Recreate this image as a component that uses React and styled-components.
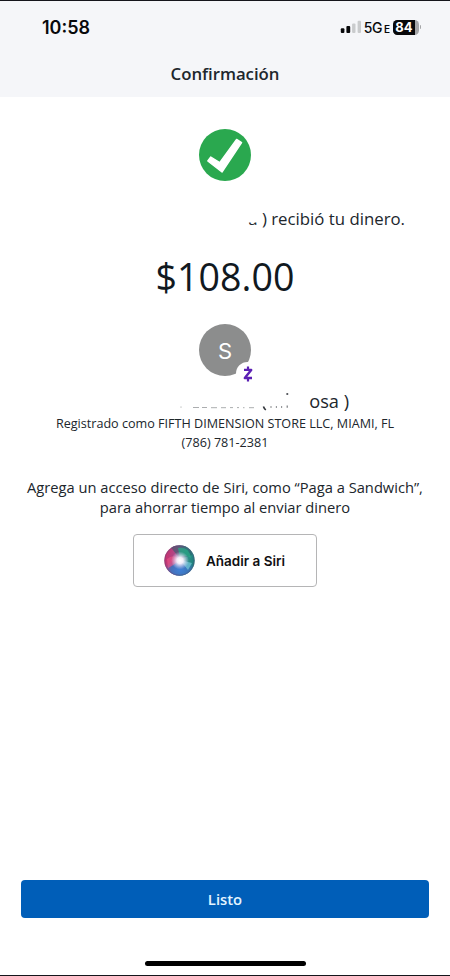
import styled, { createGlobalStyle } from 'styled-components';

export default function App() {
  return (
    <Screen>
      <GlobalStyle />
      <Header>
        <StatusBar>
          <Clock>10:58</Clock>
          <StatusIcons>
            <SignalIcon />
            <Network>
              5G<small>E</small>
            </Network>
            <Battery>
              <BatteryLevel>84</BatteryLevel>
            </Battery>
            <BatteryCap />
          </StatusIcons>
        </StatusBar>
        <Title>Confirmación</Title>
      </Header>
      <Main>
        <CheckIcon />
        <Received>
          <Faded>a</Faded> <Paren>)</Paren> recibió tu dinero.
        </Received>
        <Amount>$108.00</Amount>
        <Avatar>
          S
          <ZelleBadge>
            <ZelleIcon />
          </ZelleBadge>
        </Avatar>
        <Recipient>
          <NameTraces />
          <span>osa )</span>
        </Recipient>
        <Details>
          <p>Registrado como FIFTH DIMENSION STORE LLC, MIAMI, FL</p>
          <p>(786) 781-2381</p>
        </Details>
        <SiriText>
          <p>Agrega un acceso directo de Siri, como “Paga a Sandwich”,</p>
          <p>para ahorrar tiempo al enviar dinero</p>
        </SiriText>
        <SiriButton>
          <SiriOrb />
          <span>Añadir a Siri</span>
        </SiriButton>
      </Main>
      <Footer>
        <DoneButton>Listo</DoneButton>
        <HomeIndicator />
      </Footer>
    </Screen>
  );
}

function SignalIcon() {
  return (
    <svg width="22" height="14" viewBox="0 0 22 14">
      <rect x="0.8" y="8.2" width="3.6" height="4.8" rx="1" fill="#08090b" />
      <rect x="6.4" y="6" width="3.8" height="7" rx="1" fill="#08090b" />
      <rect x="12.1" y="3.4" width="3.4" height="9.6" rx="1" fill="#c9cbcd" />
      <rect x="17.6" y="0.8" width="3.4" height="12.2" rx="1" fill="#c9cbcd" />
    </svg>
  );
}

function CheckIcon() {
  return (
    <svg width="52" height="52" viewBox="0 0 52 52">
      <circle cx="26" cy="26" r="26" fill="#2aa84f" />
      <path
        d="M8.8 32 L11.8 28 L20.7 33.6 L37.6 10.4 L42.6 13.6 L23 43 Z"
        fill="#fff"
        stroke="#fff"
        strokeWidth="1.4"
        strokeLinejoin="round"
      />
    </svg>
  );
}

function ZelleIcon() {
  return (
    <svg width="12" height="16" viewBox="0 0 12 16" fill="none" stroke="#5b20b4">
      <path d="M2 3.9 H9.2 L2.8 12 H10" strokeWidth="2.4" strokeLinejoin="round" />
      <path d="M6 0.6 V3.9 M6 12 V15.4" strokeWidth="2.2" />
    </svg>
  );
}

// what is left of the name where it has been wiped
function NameTraces() {
  return (
    <svg width="130" height="24" viewBox="0 0 130 24" fill="none" stroke="#30343a">
      <path d="M13 17.5 v1.2" strokeWidth="1" opacity="0.4" />
      <path
        d="M25 18.5 h6 M34 18.5 h5 M43 18.7 h6 M53 18.7 h5 M62 18.6 h3 M69 18.6 h2 M75 18.7 h1.5 M81 18.7 h5"
        strokeWidth="0.9"
        opacity="0.45"
      />
      <path d="M95.4 17.4 q.8 2.2 2.4 3.6" strokeWidth="1.6" />
      <path d="M103 17.2 v1.6 M108.4 17.2 v1.6 M113.6 17.2 v1.6 M119.2 16.6 v2.2" strokeWidth="1.1" opacity="0.7" />
      <path d="M118.4 5 h1.8" strokeWidth="1.6" />
    </svg>
  );
}

function SiriOrb() {
  return (
    <svg width="31" height="31" viewBox="0 0 31 31">
      <defs>
        <radialGradient id="core">
          <stop offset="0" stopColor="#fff" />
          <stop offset="0.35" stopColor="#f8f2fd" stopOpacity="0.95" />
          <stop offset="1" stopColor="#d5d1f5" stopOpacity="0" />
        </radialGradient>
        <linearGradient id="base" x1="0" y1="0.4" x2="1" y2="0.6">
          <stop offset="0" stopColor="#cb2d6b" />
          <stop offset="0.4" stopColor="#a65190" />
          <stop offset="0.65" stopColor="#399a91" />
          <stop offset="1" stopColor="#177b79" />
        </linearGradient>
        <radialGradient id="blue">
          <stop offset="0" stopColor="#4080d8" />
          <stop offset="0.6" stopColor="#3c72bd" stopOpacity="0.9" />
          <stop offset="1" stopColor="#3c72bd" stopOpacity="0" />
        </radialGradient>
        <clipPath id="orb">
          <circle cx="15.5" cy="15.5" r="15.2" />
        </clipPath>
      </defs>
      <g clipPath="url(#orb)">
        <rect width="31" height="31" fill="url(#base)" />
        <path d="M5 0 H26 L28 10 L16 14 Z" fill="#285d68" opacity="0.55" />
        <path d="M14 3 Q25 1 27 13 Q18 8 16 14 Z" fill="#26ad88" opacity="0.7" />
        <ellipse cx="16" cy="25" rx="15" ry="11" fill="url(#blue)" />
        <path d="M3 14 Q10 8 16 15 Q10 20 4 23 Z" fill="#ee5385" opacity="0.6" />
        <path d="M16 15 L28 18 L24 25 Z" fill="#7ed8dd" opacity="0.6" />
        <circle cx="16" cy="15.5" r="9" fill="url(#core)" />
      </g>
      <circle cx="15.5" cy="15.5" r="14.8" fill="none" stroke="#594e7b" opacity="0.5" />
    </svg>
  );
}

const GlobalStyle = createGlobalStyle`
  * {
    box-sizing: border-box;
  }
  body {
    margin: 0;
    background: #fff;
  }
  p, h1 {
    margin: 0;
  }
  svg {
    display: block;
    flex-shrink: 0;
  }
`;

const Screen = styled.div`
  width: 450px;
  height: 976px;
  display: flex;
  flex-direction: column;
  border-top: 1px solid #15151b;
  border-bottom: 1px solid #15151b;
  font-family: 'Open Sans', 'Noto Sans', sans-serif;
  color: #20262c;
  white-space: nowrap;
  overflow: hidden;
`;

const Header = styled.header`
  height: 96px;
  flex-shrink: 0;
  background: #f5f6f9;
`;

const StatusBar = styled.div`
  height: 52px;
  display: flex;
  justify-content: space-between;
  padding: 15px 29px 0 42px;
  font-family: Inter, sans-serif;
  color: #08090b;
`;

const Clock = styled.div`
  padding-top: 1px;
  font-size: 18px;
  font-weight: 600;
  line-height: 22px;
`;

const StatusIcons = styled.div`
  height: 22px;
  display: flex;
  align-items: center;
`;

const Network = styled.span`
  margin-left: 2px;
  font-size: 14px;
  font-weight: 500;
  letter-spacing: -0.5px;
  small {
    margin-left: 2px;
    font-size: 10px;
    font-weight: 600;
  }
`;

const Battery = styled.div`
  width: 26px;
  height: 15px;
  margin-left: 3px;
  border-radius: 4.5px;
  background: #a5a6a8;
  overflow: hidden;
`;

const BatteryLevel = styled.div`
  width: 22px;
  height: 15px;
  padding-left: 1px;
  background: #08090b;
  color: #fff;
  font-size: 13px;
  font-weight: 700;
  line-height: 15px;
  text-align: center;
`;

const BatteryCap = styled.div`
  width: 1.5px;
  height: 4px;
  margin-left: 1px;
  border-radius: 0 2px 2px 0;
  background: #a5a6a8;
`;

const Title = styled.h1`
  font-size: 16.8px;
  font-weight: 600;
  line-height: 22px;
  letter-spacing: -0.03px;
  margin-top: 10px;
  text-align: center;
`;

const Main = styled.main`
  flex: 1;
  display: flex;
  flex-direction: column;
  align-items: center;
  padding-top: 32px;
`;

const Received = styled.p`
  align-self: flex-end;
  margin: 27px 45px 0 0;
  font-size: 16.8px;
  line-height: 22px;
`;

const Faded = styled.span`
  display: inline-block;
  clip-path: inset(14.5px 0 0 0);
`;

const Paren = styled.span`
  display: inline-block;
  clip-path: inset(5px 0 0 0);
`;

const Amount = styled.p`
  margin-top: 21px;
  font-size: 37.6px;
  line-height: 52px;
  color: #11191f;
`;

const Avatar = styled.div`
  position: relative;
  width: 52px;
  height: 52px;
  margin-top: 21px;
  border-radius: 50%;
  background: #8c8d8d;
  color: #fff;
  font-family: Inter, sans-serif;
  font-size: 22px;
  line-height: 54px;
  text-align: center;
`;

const ZelleBadge = styled.div`
  position: absolute;
  left: 37px;
  top: 38px;
  width: 23px;
  height: 23px;
  display: flex;
  align-items: center;
  justify-content: center;
  border-radius: 50%;
  background: #fff;
`;

const Recipient = styled.div`
  align-self: flex-end;
  width: 181px;
  height: 24px;
  margin: 13px 101px 0 0;
  display: flex;
  justify-content: space-between;
  font-size: 18.2px;
  line-height: 24px;
`;

const Details = styled.div`
  margin-top: 2px;
  font-size: 12.6px;
  line-height: 18.5px;
  text-align: center;
`;

const SiriText = styled.div`
  margin-top: 25px;
  font-size: 14.7px;
  line-height: 20px;
  text-align: center;
`;

const SiriButton = styled.button`
  width: 184px;
  height: 53px;
  margin-top: 17px;
  padding: 0 0 0 30px;
  display: flex;
  align-items: center;
  gap: 11px;
  border: 1px solid #b5b5b6;
  border-radius: 4px;
  background: #fff;
  color: #101012;
  font-family: Inter, sans-serif;
  font-size: 13.5px;
  font-weight: 600;
`;

const Footer = styled.footer`
  display: flex;
  flex-direction: column;
  align-items: center;
  padding: 0 21px 9px;
`;

const DoneButton = styled.button`
  width: 408px;
  height: 38px;
  border: 0;
  border-radius: 4px;
  background: #005eb8;
  color: #e4f5ff;
  font-family: 'Open Sans', sans-serif;
  font-size: 14.8px;
  font-weight: 600;
`;

const HomeIndicator = styled.div`
  width: 161px;
  height: 5px;
  margin-top: 43px;
  border-radius: 3px;
  background: #000;
`;
